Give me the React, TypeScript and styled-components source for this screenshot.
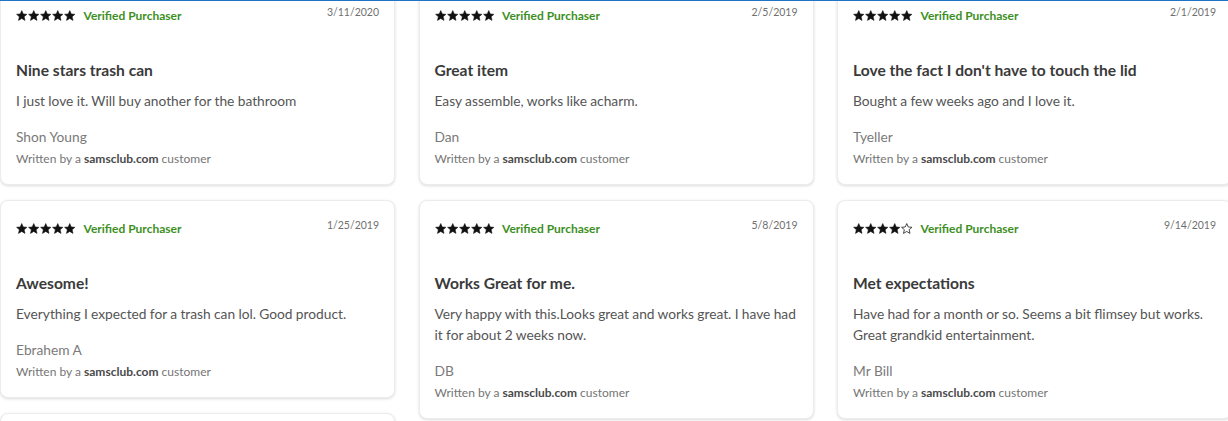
import styled, {createGlobalStyle} from 'styled-components';

const GlobalStyle = createGlobalStyle`
  html, body {
    margin: 0;
    padding: 0;
    background: #fff;
    overflow: hidden;
    font-family: Lato, "Liberation Sans", sans-serif;
  }
`;

const TopLine = styled.div`
  position: fixed;
  top: 0;
  left: 0;
  right: 0;
  height: 1px;
  background: #1f73c8;
  z-index: 2;
`;

const Board = styled.div`
  display: grid;
  grid-template-columns: repeat(3, 395px);
  column-gap: 23.5px;
  align-items: start;
  margin-top: -13px;
`;

const Column = styled.div`
  display: flex;
  flex-direction: column;
  gap: 15px;
`;

const Card = styled.div`
  background: #fff;
  border: 1px solid #ececec;
  border-radius: 8px;
  box-shadow: 0 1px 3px rgba(0, 0, 0, 0.14);
  padding: 15px 15px 17px;
  display: flex;
  flex-direction: column;
`;

const Header = styled.div`
  display: flex;
  justify-content: space-between;
  align-items: flex-start;
  height: 24px;
`;

const RatingRow = styled.div`
  display: flex;
  align-items: center;
  height: 24px;
`;

const Stars = styled.div`
  display: flex;
  gap: 0.5px;
  margin-right: 8px;
`;

const Verified = styled.span`
  color: #3d8f1f;
  font-size: 12px;
  font-weight: 700;
`;

const DateText = styled.span`
  color: #6f6f6f;
  font-size: 10.5px;
  line-height: 18px;
`;

const Title = styled.h3`
  margin: 33px 0 0;
  font-size: 15.6px;
  line-height: 20px;
  font-weight: 700;
  color: #3a3a3a;
`;

const Body = styled.p`
  margin: 9.5px -5px 0 0;
  font-size: 13.75px;
  line-height: 21px;
  word-spacing: -0.2px;
  color: #555;
`;

const Author = styled.div`
  margin-top: 16.5px;
  font-size: 13.75px;
  line-height: 20px;
  color: #7a7a7a;
`;

const Written = styled.div`
  margin-top: 4px;
  font-size: 12px;
  line-height: 16px;
  color: #757575;

  b {
    color: #4a4a4a;
    font-weight: 700;
  }
`;

const Star = ({filled}: {filled: boolean}) => (
  <svg width="11.5" height="11" viewBox="0 0 24 23">
    <path
      d="M12 1.2l3.2 7.1 7.6.7-5.8 5.1 1.8 7.6L12 17.7l-6.8 4 1.8-7.6-5.8-5.1 7.6-.7z"
      fill={filled ? '#111' : 'none'}
      stroke="#111"
      strokeWidth={filled ? 1.2 : 1.6}
      strokeLinejoin="round"
    />
  </svg>
);

type Review = {
  rating: number;
  date: string;
  title: string;
  text: string;
  author: string;
};

const columns: Review[][] = [
  [
    {rating: 5, date: '3/11/2020', title: 'Nine stars trash can', text: 'I just love it. Will buy another for the bathroom', author: 'Shon Young'},
    {rating: 5, date: '1/25/2019', title: 'Awesome!', text: 'Everything I expected for a trash can lol. Good product.', author: 'Ebrahem A'},
    {rating: 5, date: '12/9/2018', title: 'Love it', text: 'Works great.', author: 'Kim'},
  ],
  [
    {rating: 5, date: '2/5/2019', title: 'Great item', text: 'Easy assemble, works like acharm.', author: 'Dan'},
    {rating: 5, date: '5/8/2019', title: 'Works Great for me.', text: 'Very happy with this.Looks great and works great. I have had it for about 2 weeks now.', author: 'DB'},
  ],
  [
    {rating: 5, date: '2/1/2019', title: "Love the fact I don't have to touch the lid", text: 'Bought a few weeks ago and I love it.', author: 'Tyeller'},
    {rating: 4, date: '9/14/2019', title: 'Met expectations', text: 'Have had for a month or so. Seems a bit flimsey but works. Great grandkid entertainment.', author: 'Mr Bill'},
  ],
];

const ReviewCard = ({review}: {review: Review}) => (
  <Card>
    <Header>
      <RatingRow>
        <Stars>
          {[0, 1, 2, 3, 4].map((i) => (
            <Star key={i} filled={i < review.rating}/>
          ))}
        </Stars>
        <Verified>Verified Purchaser</Verified>
      </RatingRow>
      <DateText>{review.date}</DateText>
    </Header>
    <Title>{review.title}</Title>
    <Body>{review.text}</Body>
    <Author>{review.author}</Author>
    <Written>Written by a <b>samsclub.com</b> customer</Written>
  </Card>
);

export default function App() {
  return (
    <>
      <GlobalStyle/>
      <TopLine/>
      <Board>
        {columns.map((col, c) => (
          <Column key={c}>
            {col.map((r) => (
              <ReviewCard key={r.title} review={r}/>
            ))}
          </Column>
        ))}
      </Board>
    </>
  );
}
